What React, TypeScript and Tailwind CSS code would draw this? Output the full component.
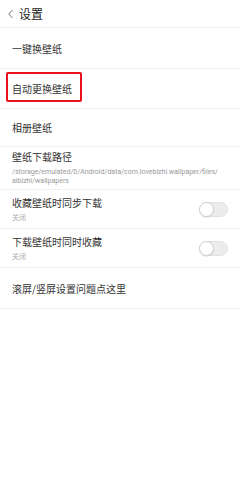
import React from "react";

function Toggle() {
  return (
    <div className="w-[29px] h-[15px] rounded-full bg-[#ececec] border border-[#e2e2e2] relative shrink-0">
      <div className="absolute left-[-1px] top-[-1px] w-[15px] h-[15px] rounded-full bg-white border border-[#cfcfcf] shadow-[0_1px_1px_rgba(0,0,0,0.08)]" />
    </div>
  );
}

export default function App() {
  const font = { fontFamily: '"Noto Sans CJK SC", "Noto Sans", sans-serif' };
  return (
    <div className="w-[240px] h-[500px] bg-white text-[#333]" style={font}>
      <div className="h-[28px] flex items-center pl-[7px] border-b border-[#eeeeee]">
        <svg width="8" height="10" viewBox="0 0 8 10" className="mr-[4px]">
          <path d="M5.5 1 L1.8 5 L5.5 9" fill="none" stroke="#777" strokeWidth="1" />
        </svg>
        <span className="text-[12px] leading-none text-[#222]">设置</span>
      </div>
      <div className="h-[41px] flex items-center pl-[12px] border-b border-[#f2f2f2] text-[10px]">一键换壁纸</div>
      <div className="h-[40px] flex items-center pl-[12px] border-b border-[#f2f2f2] text-[10px] relative">
        自动更换壁纸
        <div className="absolute left-[6px] top-[3px] w-[76px] h-[30px] border-2 border-[#e8101a] rounded-[2px]" />
      </div>
      <div className="h-[38px] flex items-center pl-[12px] border-b border-[#f2f2f2] text-[10px]">相册壁纸</div>
      <div className="h-[43px] flex flex-col justify-center pl-[12px] pr-[8px] border-b border-[#f2f2f2]">
        <div className="text-[10px] leading-[13px]">壁纸下载路径</div>
        <div className="text-[7px] leading-[9.5px] text-[#999] mt-[5px]" style={{ fontFamily: 'Roboto, "Noto Sans", sans-serif' }}>
          /storage/emulated/0/Android/data/com.lovebizhi.wallpaper/files/
          <br />
          aibizhi/wallpapers
        </div>
      </div>
      <div className="h-[39px] flex items-center pl-[12px] pr-[12px] border-b border-[#f2f2f2]">
        <div className="flex-1 flex flex-col">
          <div className="text-[10px] leading-[13px]">收藏壁纸时同步下载</div>
          <div className="text-[7px] leading-[9px] text-[#aaa] mt-[4px]">关闭</div>
        </div>
        <Toggle />
      </div>
      <div className="h-[39px] flex items-center pl-[12px] pr-[12px] border-b border-[#f2f2f2]">
        <div className="flex-1 flex flex-col">
          <div className="text-[10px] leading-[13px]">下载壁纸时同时收藏</div>
          <div className="text-[7px] leading-[9px] text-[#aaa] mt-[4px]">关闭</div>
        </div>
        <Toggle />
      </div>
      <div className="h-[41px] flex items-center pl-[12px] border-b border-[#f2f2f2] text-[10px]">滚屏/竖屏设置问题点这里</div>
    </div>
  );
}
